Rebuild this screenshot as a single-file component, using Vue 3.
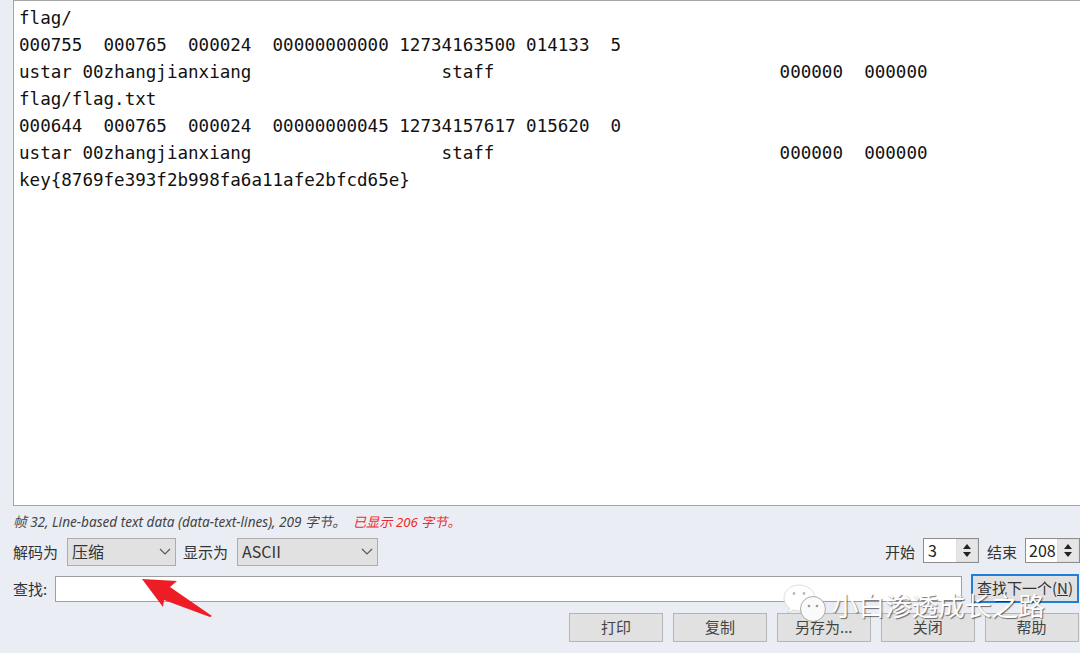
<script setup>
const lines = [
  'flag/',
  '000755  000765  000024  00000000000 12734163500 014133  5',
  'ustar 00zhangjianxiang                  staff                           000000  000000',
  'flag/flag.txt',
  '000644  000765  000024  00000000045 12734157617 015620  0',
  'ustar 00zhangjianxiang                  staff                           000000  000000',
  'key{8769fe393f2b998fa6a11afe2bfcd65e}',
]
const buttons = ['打印', '复制', '另存为...', '关闭', '帮助']
</script>

<template>
  <div class="win">
    <div class="view">
      <div v-for="(l, i) in lines" :key="i" class="line">{{ l }}</div>
    </div>
    <div class="status"><i>帧 32, Line-based text data (data-text-lines), 209 字节。</i><i class="red">已显示 206 字节。</i></div>
    <div class="row decode">
      <span>解码为</span>
      <div class="select s1"><span>压缩</span><svg width="12" height="7" viewBox="0 0 12 7"><path d="M1 1l5 5 5-5" fill="none" stroke="#555" stroke-width="1.1"/></svg></div>
      <span class="l2">显示为</span>
      <div class="select s2"><span>ASCII</span><svg width="12" height="7" viewBox="0 0 12 7"><path d="M1 1l5 5 5-5" fill="none" stroke="#555" stroke-width="1.1"/></svg></div>
      <span class="grow"></span>
      <span>开始</span>
      <div class="spin sp1"><span>3</span><div class="arrows"><b class="up"></b><b class="down"></b></div></div>
      <span class="l3">结束</span>
      <div class="spin sp2"><span>208</span><div class="arrows"><b class="up"></b><b class="down"></b></div></div>
    </div>
    <div class="row find">
      <span class="flabel">查找:</span>
      <div class="input"></div>
      <div class="next">查找下一个(<u>N</u>)</div>
    </div>
    <div class="btns">
      <div v-for="b in buttons" :key="b" class="btn">{{ b }}</div>
    </div>

    <svg class="arrow" width="80" height="50" viewBox="0 0 80 50">
      <path d="M0 1L35 3L28 9L70 38L68 39L22 22L21 29Z" fill="#ee1c25"/>
    </svg>
    <div class="mark">
      <svg class="wx" width="46" height="38" viewBox="0 0 46 38">
        <path d="M16 1C8 1 1 6.500 1 14c0 4 2 7.500 5.500 10L4.500 29l6-3c2 .6 4 1 5.500 1 C25 27 32 21 32 14 32 6.500 24 1 16 1Z" fill="#fff" stroke="#c8c8c8" stroke-width=".6"/>
        <circle cx="30" cy="25" r="12.500" fill="#fafafa" stroke="#8a8a8a" stroke-width=".7"/>
        <circle cx="26" cy="22" r="1.300" fill="#999"/><circle cx="34" cy="22" r="1.300" fill="#999"/>
        <circle cx="11" cy="9.500" r="1.400" fill="#bbb"/><circle cx="21" cy="9.500" r="1.400" fill="#bbb"/>
      </svg>
      <span class="wm">小白渗透成长之路</span>
    </div>
  </div>
</template>

<style scoped>
.win { position: relative; width: 1080px; height: 653px; overflow: hidden; background: #eaedf3; box-sizing: border-box; padding-left: 13px; color: #333; font-family: "Noto Sans CJK SC", "Noto Sans", sans-serif; font-size: 15px; }
.view { height: 506px; box-sizing: border-box; background: #fff; border: 1px solid #a5a5a5; border-right: 0; padding: 4px 0 0 5px; }
.line { height: 27px; line-height: 27px; font-family: "DejaVu Sans Mono", monospace; font-size: 17.56px; color: #111; white-space: pre; }
.status { height: 20px; margin-top: 6px; line-height: 20px; font-size: 13.6px; color: #444; font-family: "Noto Sans", "Noto Sans CJK SC", sans-serif; white-space: nowrap; }
.status i { font-style: italic; }
.status .red { color: #ee2a2a; margin-left: 7px; font-size: 13.2px; }
.row { display: flex; align-items: center; }
.decode { height: 28px; margin-top: 6px; }
.decode > span { margin-bottom: 2px; }
.l2 { margin-left: 7px; }
.l3 { margin-left: 8px; }
.grow { flex: 1; }
.select { height: 28px; box-sizing: border-box; margin-left: 9px; background: #e1e1e1; border: 1px solid #adadad; display: flex; align-items: center; justify-content: space-between; padding: 0 4px 2px 4px; font-size: 16px; }
.s1 { width: 109px; }
.s2 { width: 141px; }
.spin { height: 25px; align-self: flex-start; box-sizing: border-box; background: #fff; border: 1px solid #8d8d8d; margin-left: 8px; display: flex; justify-content: space-between; align-items: stretch; line-height: 23px; padding-left: 4px; font-size: 16px; color: #222; }
.sp1 { width: 56px; }
.sp2 { width: 55px; padding-left: 3px; }
.arrows { width: 20px; background: #e6e6e6; border: 1px solid #ddd; display: flex; flex-direction: column; align-items: center; justify-content: center; gap: 3px; }
.up { width: 0; height: 0; border: 4px solid transparent; border-top: 0; border-bottom: 5px solid #222; }
.down { width: 0; height: 0; border: 4px solid transparent; border-bottom: 0; border-top: 5px solid #222; }
.find { height: 29px; margin-top: 8px; }
.flabel { width: 42px; }
.input { width: 907px; height: 26px; box-sizing: border-box; background: #fff; border: 1px solid #a0a0a0; }
.next { width: 108px; height: 29px; box-sizing: border-box; margin-left: 9px; background: #e1e1e1; border: 2px solid #1f7fd8; text-align: center; line-height: 24px; white-space: nowrap; color: #333; }
.btns { display: flex; gap: 9.900px; margin-top: 10px; margin-left: 556px; }
.btn { flex: none; width: 94px; height: 29px; box-sizing: border-box; background: #e1e1e1; border: 1px solid #b4b4b4; text-align: center; line-height: 26px; color: #444; }
.arrow { position: absolute; left: 142px; top: 578px; }
.mark { position: absolute; left: 783px; top: 583px; display: flex; align-items: center; }
.wx { flex: none; }
.wm { margin-left: 3px; margin-top: 4px; color: #fff; font-size: 26.6px; line-height: 36px; white-space: nowrap; text-shadow: 1px 1px 1px rgba(0,0,0,.55); }
</style>
